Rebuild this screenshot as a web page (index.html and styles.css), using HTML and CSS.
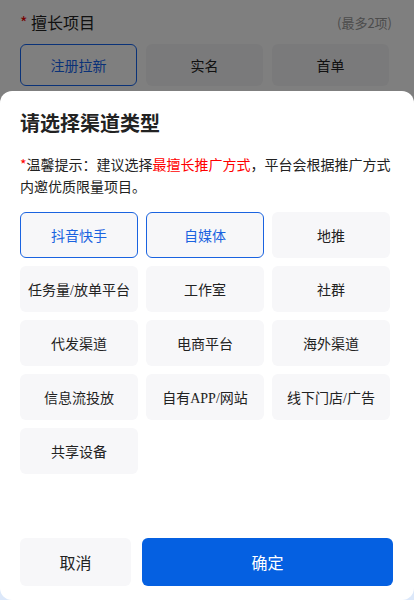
FILE: index.html
```html
<!DOCTYPE html>
<html lang="zh-CN">
<head>
    <meta charset="UTF-8">
    <meta name="viewport" content="width=device-width, initial-scale=1.0">
    <title>选择渠道类型</title>
    <link rel="stylesheet" href="styles.css">
</head>
<body>
    <div class="page">
        <div class="field-head">
            <span class="field-label"><span class="req">*</span> 擅长项目</span>
            <span class="field-tip">(最多2项)</span>
        </div>
        <div class="field-opts">
            <div class="opt active">注册拉新</div>
            <div class="opt">实名</div>
            <div class="opt">首单</div>
        </div>
    </div>

    <div class="mask"></div>
    <div class="sheet-edge"></div>

    <div class="sheet">
        <h2 class="sheet-title">请选择渠道类型</h2>
        <p class="sheet-hint"><span class="red">*</span>温馨提示：建议选择<span class="red">最擅长推广方式</span>，平台会根据推广方式内邀优质限量项目。</p>

        <div class="channel-grid">
            <div class="channel active">抖音快手</div>
            <div class="channel active">自媒体</div>
            <div class="channel">地推</div>
            <div class="channel">任务量/放单平台</div>
            <div class="channel">工作室</div>
            <div class="channel">社群</div>
            <div class="channel">代发渠道</div>
            <div class="channel">电商平台</div>
            <div class="channel">海外渠道</div>
            <div class="channel">信息流投放</div>
            <div class="channel">自有APP/网站</div>
            <div class="channel">线下门店/广告</div>
            <div class="channel">共享设备</div>
        </div>

        <div class="sheet-actions">
            <button class="btn btn-cancel">取消</button>
            <button class="btn btn-ok">确定</button>
        </div>
    </div>
</body>
</html>
```

FILE: styles.css
```css
* {
    box-sizing: border-box;
}
body {
    margin: 0;
    font-family: "Noto Sans CJK SC", "Noto Sans", sans-serif;
    color: #222;
    background-color: #fff;
}
.page {
    padding: 10px 22px 0 20px;
}
.field-head {
    display: flex;
    justify-content: space-between;
    align-items: center;
    height: 24px;
}
.field-label {
    font-size: 16px;
    color: #222;
}
.req {
    color: #e00;
}
.field-tip {
    font-size: 13px;
    color: #999;
}
.field-opts {
    display: flex;
    gap: 9px;
    margin-top: 10px;
}
.opt {
    width: 117px;
    height: 42px;
    display: flex;
    align-items: center;
    justify-content: center;
    font-size: 14px;
    background-color: #f5f5f7;
    border-radius: 6px;
}
.opt.active {
    background-color: #fff;
    border: 1px solid #1464f0;
    color: #1464f0;
}
.mask {
    position: fixed;
    inset: 0;
    background-color: rgba(0, 0, 0, 0.5);
}
.sheet-edge {
    position: fixed;
    left: 0;
    right: 0;
    bottom: 0;
    height: 14px;
    background-color: #dce8fa;
}
.sheet {
    position: fixed;
    left: 0;
    right: 0;
    bottom: 0;
    top: 91px;
    background-color: #fff;
    border-radius: 12px;
    padding: 20px 18px 0 20px;
}
.sheet-title {
    margin: 0;
    font-size: 20px;
    font-weight: bold;
    line-height: 24px;
    color: #222;
}
.sheet-hint {
    margin: 18px 0 0;
    font-size: 14px;
    line-height: 22px;
    color: #222;
}
.red {
    color: #f00;
}
.channel-grid {
    display: grid;
    grid-template-columns: repeat(3, 118px);
    grid-auto-rows: 46px;
    gap: 8px;
    margin-top: 15px;
}
.channel {
    display: flex;
    align-items: center;
    justify-content: center;
    font-family: "Liberation Serif", "Noto Sans CJK SC", serif;
    font-size: 14px;
    background-color: #f7f7f9;
    border-radius: 6px;
    color: #222;
}
.channel.active {
    border: 1px solid #1a63e0;
    color: #1a63e0;
}
.sheet-actions {
    position: absolute;
    left: 20px;
    right: 21px;
    bottom: 14px;
    display: flex;
    gap: 11px;
}
.btn {
    height: 48px;
    border: none;
    border-radius: 6px;
    font-family: "Noto Sans CJK SC", sans-serif;
    font-size: 16px;
}
.btn-cancel {
    width: 111px;
    background-color: #f7f7f9;
    color: #222;
}
.btn-ok {
    flex: 1;
    background-color: #0560e1;
    color: #fff;
}
```
